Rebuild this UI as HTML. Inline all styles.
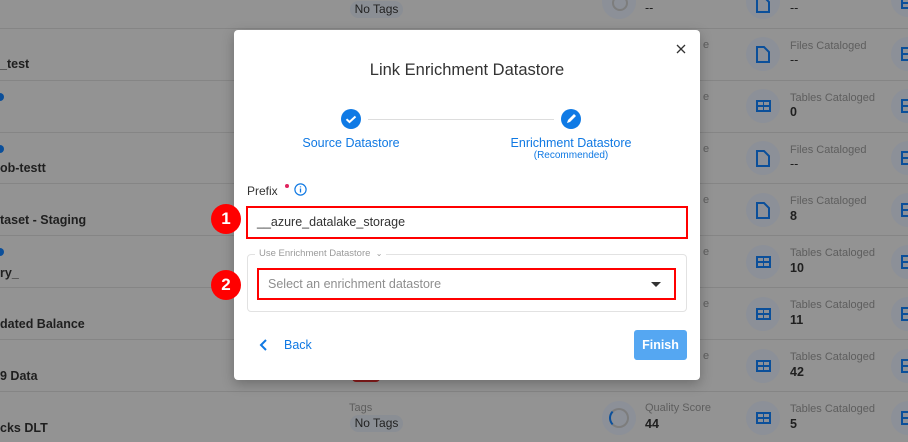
<!DOCTYPE html>
<html><head><meta charset="utf-8"><style>
*{margin:0;padding:0;box-sizing:border-box}
body{width:908px;height:442px;overflow:hidden;background:#939393;font-family:"Liberation Sans",sans-serif;position:relative}
.a{position:absolute}
.line{position:absolute;left:0;width:908px;height:1px;background:#858585}
.nm{position:absolute;left:0;font-size:12.5px;font-weight:bold;color:#1f1f1f}
.lbl{position:absolute;font-size:11px;color:#5e5e5e}
.val{position:absolute;font-size:12.5px;font-weight:bold;color:#1f1f1f}
.ic{position:absolute;width:34px;height:34px;border-radius:50%;background:#8c9098}
.dot{position:absolute;left:-4px;width:8px;height:8px;border-radius:50%;background:#0b4f9a}
.e{position:absolute;left:703px;font-size:11px;color:#5e5e5e}
</style></head><body>
<div class="line" style="top:28px"></div><div class="line" style="top:80px"></div><div class="line" style="top:132px"></div><div class="line" style="top:183px"></div><div class="line" style="top:235px"></div><div class="line" style="top:287px"></div><div class="line" style="top:339px"></div><div class="line" style="top:391px"></div>

<div class="nm" style="top:57px">_test</div>
<div class="dot" style="top:93px"></div>
<div class="dot" style="top:145px"></div>
<div class="nm" style="top:161px">ob-testt</div>
<div class="nm" style="top:213px">taset - Staging</div>
<div class="dot" style="top:248px"></div>
<div class="nm" style="top:266px">ry_</div>
<div class="nm" style="top:317px">dated Balance</div>
<div class="nm" style="top:369px">9 Data</div>
<div class="nm" style="top:421px">cks DLT</div>

<div class="a" style="left:350px;top:1px;width:53px;height:17px;border-radius:9px;background:#8a8e94;font-size:12px;color:#222;text-align:center;line-height:17px">No Tags</div>
<div class="a" style="left:349px;top:402px;font-size:11px;color:#5e5e5e">Tags</div>
<div class="a" style="left:350px;top:415px;width:53px;height:17px;border-radius:9px;background:#8a8e94;font-size:12px;color:#222;text-align:center;line-height:17px">No Tags</div>
<div class="a" style="left:352px;top:376px;width:28px;height:6px;background:#8b1c1c;border-radius:0 0 4px 4px"></div>

<div class="ic" style="left:602px;top:-15px"></div><div class="a" style="left:612px;top:-5px;width:16px;height:16px;border:2px solid #7d7d7d;border-radius:50%"></div>
<div class="val" style="left:645px;top:1px;font-weight:normal">--</div>
<div class="ic" style="left:602px;top:401px"></div><div class="a" style="left:609px;top:408px;width:20px;height:20px;border:2px solid #7d7d7d;border-left-color:#0b4f9a;border-radius:50%"></div>
<div class="lbl" style="left:645px;top:402px">Quality Score</div><div class="val" style="left:645px;top:417px">44</div>

<div class="e" style="top:39px">e</div><div class="e" style="top:91px">e</div><div class="e" style="top:143px">e</div><div class="e" style="top:194px">e</div><div class="e" style="top:246px">e</div><div class="e" style="top:298px">e</div><div class="e" style="top:350px">e</div>

<div class="ic" style="left:746px;top:-15px"></div><div class="val" style="left:790px;top:1px;font-weight:normal">--</div>
<div class="ic" style="left:746px;top:37px"></div><div class="lbl" style="left:790px;top:40px">Files Cataloged</div><div class="val" style="left:790px;top:53px;font-weight:normal">--</div>
<div class="ic" style="left:746px;top:89px"></div><div class="lbl" style="left:790px;top:92px">Tables Cataloged</div><div class="val" style="left:790px;top:105px">0</div>
<div class="ic" style="left:746px;top:141px"></div><div class="lbl" style="left:790px;top:144px">Files Cataloged</div><div class="val" style="left:790px;top:157px;font-weight:normal">--</div>
<div class="ic" style="left:746px;top:193px"></div><div class="lbl" style="left:790px;top:195px">Files Cataloged</div><div class="val" style="left:790px;top:209px">8</div>
<div class="ic" style="left:746px;top:245px"></div><div class="lbl" style="left:790px;top:247px">Tables Cataloged</div><div class="val" style="left:790px;top:261px">10</div>
<div class="ic" style="left:746px;top:297px"></div><div class="lbl" style="left:790px;top:299px">Tables Cataloged</div><div class="val" style="left:790px;top:313px">11</div>
<div class="ic" style="left:746px;top:349px"></div><div class="lbl" style="left:790px;top:351px">Tables Cataloged</div><div class="val" style="left:790px;top:365px">42</div>
<div class="ic" style="left:746px;top:401px"></div><div class="lbl" style="left:790px;top:403px">Tables Cataloged</div><div class="val" style="left:790px;top:417px">5</div>

<svg class="a" style="left:0;top:0" width="908" height="442">
<g fill="none" stroke="#0b4f9a" stroke-width="2">
<path d="M757 -3h7l5 5v10h-12z"/>
<path d="M757 47h7l5 5v10h-12z"/><path d="M757 151h7l5 5v10h-12z"/><path d="M757 203h7l5 5v10h-12z"/>
</g>
<g fill="#0b4f9a">
<path d="M756 100h15v12h-15z M758 102v3h5v-3z M764 102v3h5v-3z M758 107v3h5v-3z M764 107v3h5v-3z" fill-rule="evenodd"/>
<path d="M756 256h15v12h-15z M758 258v3h5v-3z M764 258v3h5v-3z M758 263v3h5v-3z M764 263v3h5v-3z" fill-rule="evenodd"/>
<path d="M756 308h15v12h-15z M758 310v3h5v-3z M764 310v3h5v-3z M758 315v3h5v-3z M764 315v3h5v-3z" fill-rule="evenodd"/>
<path d="M756 360h15v12h-15z M758 362v3h5v-3z M764 362v3h5v-3z M758 367v3h5v-3z M764 367v3h5v-3z" fill-rule="evenodd"/>
<path d="M756 412h15v12h-15z M758 414v3h5v-3z M764 414v3h5v-3z M758 419v3h5v-3z M764 419v3h5v-3z" fill-rule="evenodd"/>
</g>
<g fill="#8c9098"><circle cx="908" cy="0" r="17"/><circle cx="908" cy="54" r="17"/><circle cx="908" cy="106" r="17"/><circle cx="908" cy="158" r="17"/><circle cx="908" cy="210" r="17"/><circle cx="908" cy="262" r="17"/><circle cx="908" cy="314" r="17"/><circle cx="908" cy="366" r="17"/><circle cx="908" cy="418" r="17"/></g>
<g fill="none" stroke="#0b4f9a" stroke-width="2"><path d="M908 -2h-6v10h6 M902 3h6"/><path d="M908 48h-6v12h6 M902 54h6"/><path d="M908 100h-6v12h6 M902 106h6"/><path d="M908 152h-6v12h6 M902 158h6"/><path d="M908 204h-6v12h6 M902 210h6"/><path d="M908 256h-6v12h6 M902 262h6"/><path d="M908 308h-6v12h6 M902 314h6"/><path d="M908 360h-6v12h6 M902 366h6"/><path d="M908 412h-6v12h6 M902 418h6"/></g>
</svg>

<div class="a" style="left:234px;top:30px;width:466px;height:350px;background:#fff;border-radius:4px;box-shadow:0 4px 12px rgba(0,0,0,.25)"></div>
<svg class="a" style="left:675px;top:43px" width="12" height="12"><path d="M2 2L10 10M10 2L2 10" stroke="#333" stroke-width="1.3"/></svg>
<div class="a" style="left:234px;top:61px;width:466px;text-align:center;font-size:16.5px;color:#333">Link Enrichment Datastore</div>
<div class="a" style="left:368px;top:119px;width:186px;height:1px;background:#ddd"></div>
<svg class="a" style="left:340px;top:108px" width="22" height="22"><circle cx="11" cy="11" r="10" fill="#0f7ae5"/><path d="M6.5 11.2l3 2.8 6-5.5" stroke="#fff" stroke-width="2" fill="none"/></svg>
<svg class="a" style="left:560px;top:108px" width="22" height="22"><circle cx="11" cy="11" r="10" fill="#0f7ae5"/><path d="M7 15l1-3 6-6 2 2-6 6z" fill="#fff"/></svg>
<div class="a" style="left:284px;top:136px;width:134px;text-align:center;font-size:12.5px;color:#1079e3">Source Datastore</div>
<div class="a" style="left:496px;top:136px;width:150px;text-align:center;font-size:12.5px;color:#1079e3">Enrichment Datastore</div>
<div class="a" style="left:496px;top:150px;width:150px;text-align:center;font-size:10px;color:#1079e3">(Recommended)</div>
<div class="a" style="left:247px;top:184px;font-size:12px;color:#333">Prefix</div>
<div class="a" style="left:285px;top:184px;width:4px;height:4px;border-radius:50%;background:#e0245e"></div>
<svg class="a" style="left:294px;top:183px" width="13" height="13"><circle cx="6.5" cy="6.5" r="5.6" fill="none" stroke="#1079e3" stroke-width="1.2"/><path d="M6.5 5.5v4M6.5 3.4v1" stroke="#1079e3" stroke-width="1.3"/></svg>
<div class="a" style="left:246px;top:206px;width:442px;height:33px;border:2px solid #f00"></div>
<div class="a" style="left:257px;top:215px;font-size:12.5px;color:#333">__azure_datalake_storage</div>
<div class="a" style="left:247px;top:254px;width:440px;height:58px;border:1px solid #e2e2e2;border-radius:4px"></div>
<div class="a" style="left:255px;top:248px;padding:0 4px;background:#fff;font-size:9.5px;color:#9a9a9a">Use Enrichment Datastore &nbsp;<span style="font-size:8px">&#8964;</span></div>
<div class="a" style="left:257px;top:268px;width:419px;height:32px;border:2px solid #f00"></div>
<div class="a" style="left:268px;top:277px;font-size:12.5px;color:#8e8e8e">Select an enrichment datastore</div>
<svg class="a" style="left:651px;top:282px" width="10" height="6"><path d="M0 0h10L5 5z" fill="#333"/></svg>
<svg class="a" style="left:259px;top:339px" width="10" height="12"><path d="M7 1L2 6l5 5" stroke="#1079e3" stroke-width="2" fill="none"/></svg>
<div class="a" style="left:284px;top:338px;font-size:12.5px;color:#1079e3">Back</div>
<div class="a" style="left:634px;top:330px;width:53px;height:30px;background:#55a7f2;border-radius:3px;color:#fff;font-size:12.5px;font-weight:bold;text-align:center;line-height:30px">Finish</div>

<div class="a" style="left:211px;top:204px;width:30px;height:30px;border-radius:50%;background:#f00;color:#fff;font-size:17px;font-weight:bold;text-align:center;line-height:30px">1</div>
<div class="a" style="left:211px;top:270px;width:30px;height:30px;border-radius:50%;background:#f00;color:#fff;font-size:17px;font-weight:bold;text-align:center;line-height:30px">2</div>
</body></html>
